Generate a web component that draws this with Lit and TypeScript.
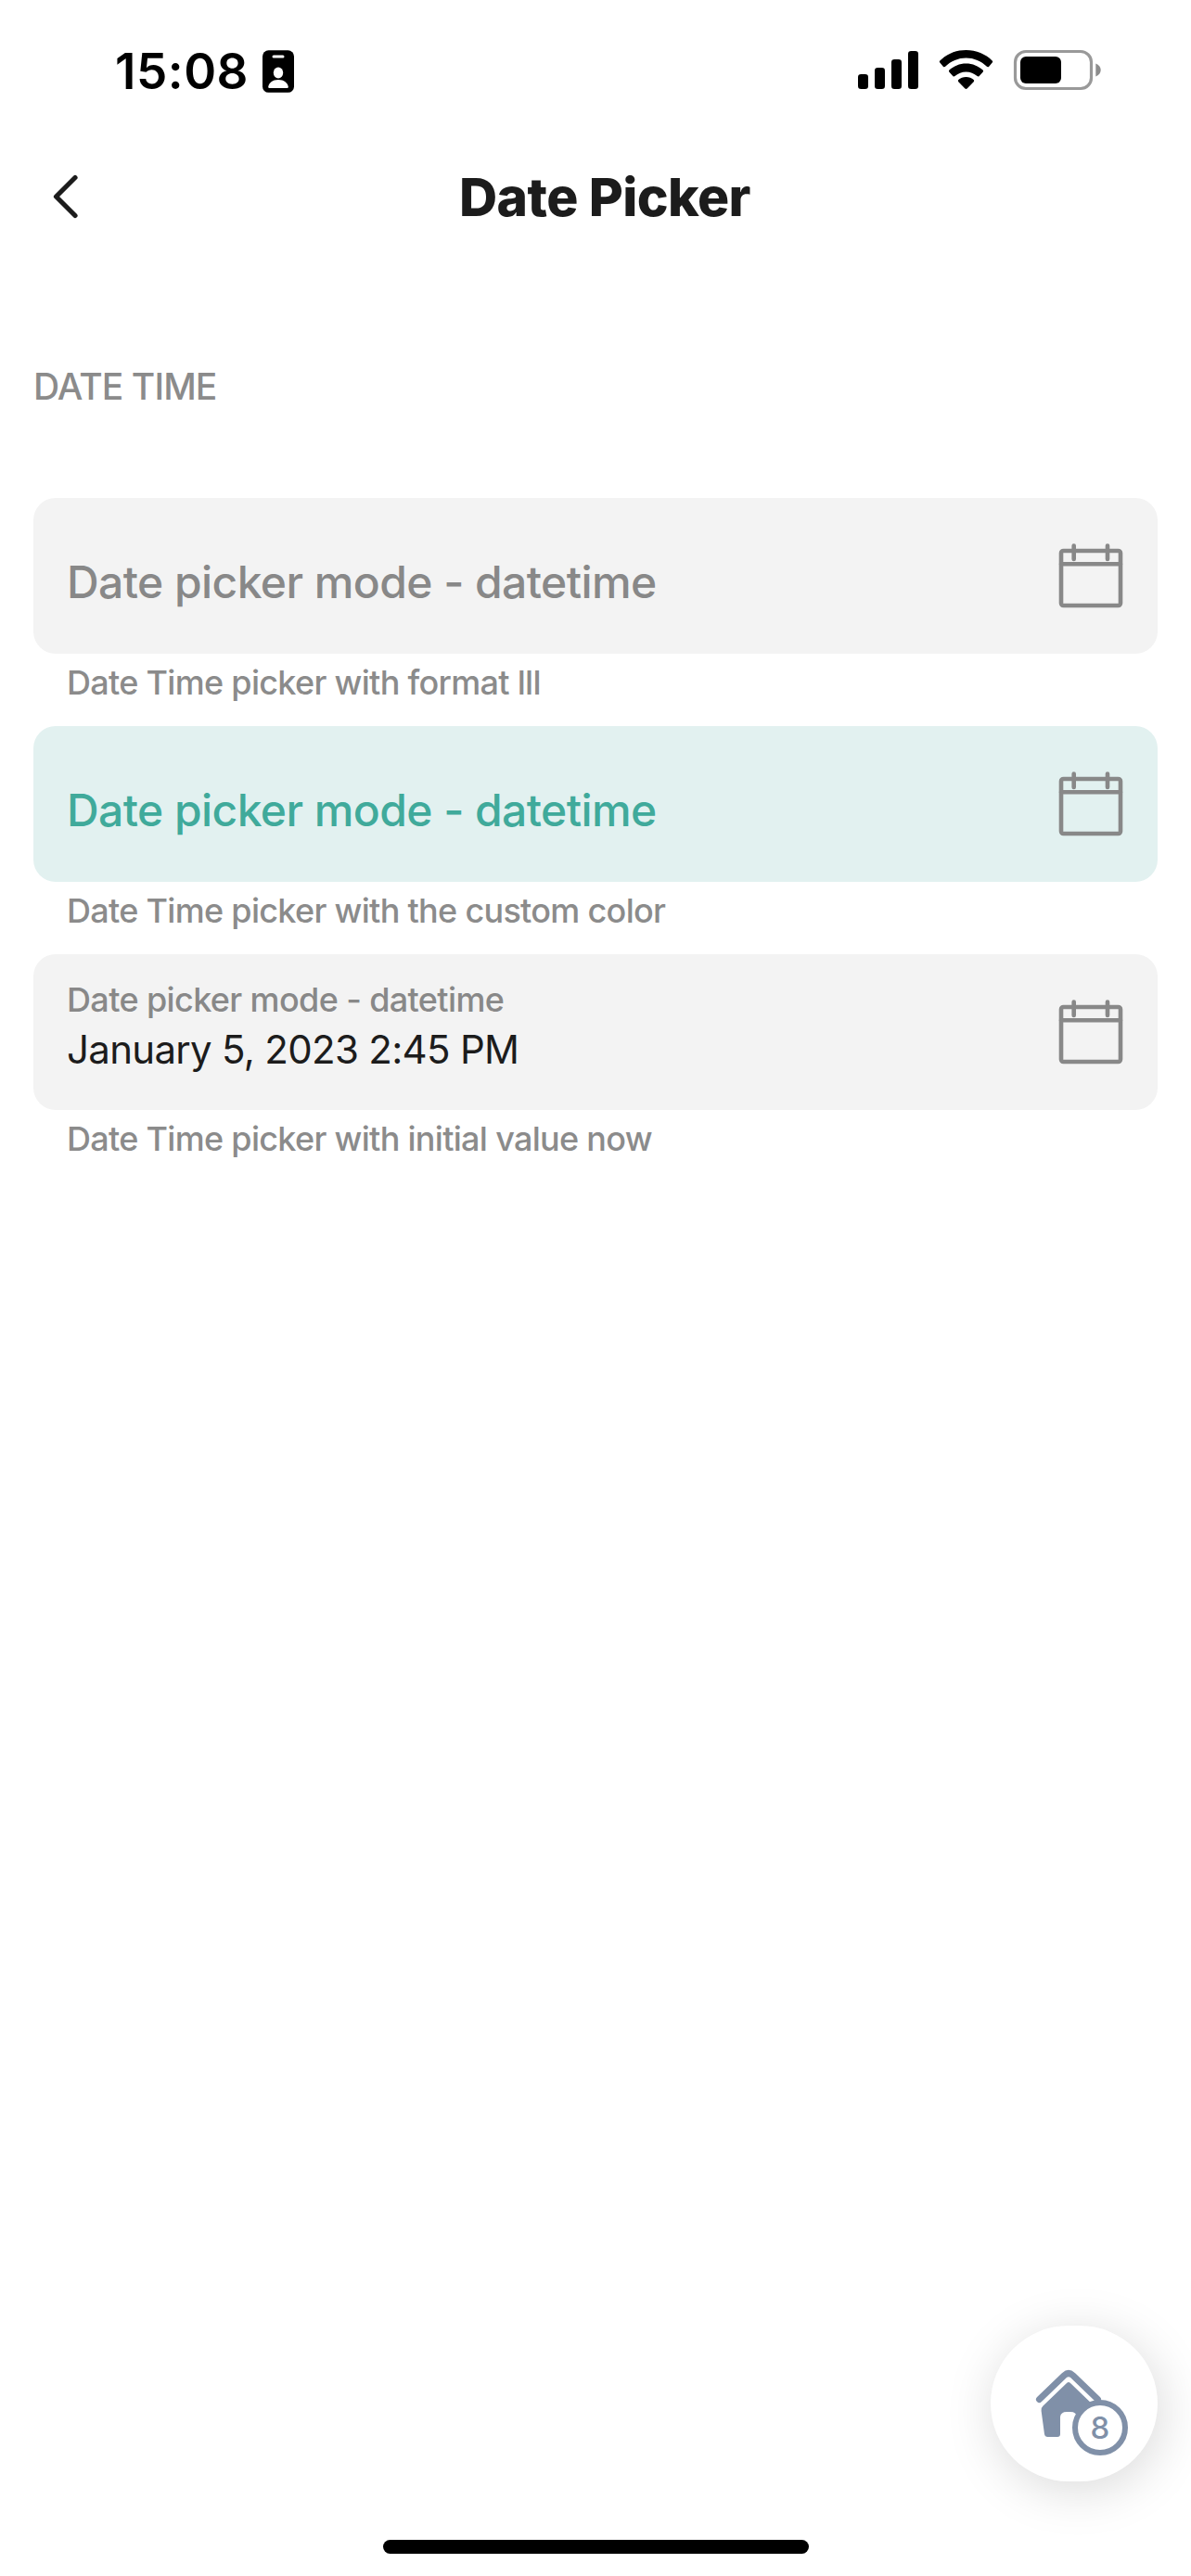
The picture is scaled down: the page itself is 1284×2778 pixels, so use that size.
import { LitElement, html, svg, css, nothing } from "lit";
import { customElement, property } from "lit/decorators.js";

@customElement("status-bar")
class StatusBar extends LitElement {
  static styles = css`
    :host {
      display: flex;
      justify-content: space-between;
      align-items: flex-start;
      height: 141px;
      padding: 0 96px 0 124px;
      box-sizing: border-box;
    }
    .left {
      display: flex;
      align-items: flex-start;
      gap: 16px;
      padding-top: 45px;
    }
    .time {
      font-size: 53px;
      font-weight: 600;
      line-height: 65px;
      letter-spacing: 0.5px;
      width: 143px;
      white-space: nowrap;
      color: #000;
    }
    .badge {
      margin-top: 9px;
    }
    .right {
      padding-top: 53px;
    }
    svg {
      display: block;
    }
  `;
  render() {
    return html`
      <div class="left">
        <span class="time">15:08</span>
        <svg class="badge" width="34" height="46" viewBox="0 0 34 46">
          <rect x="0" y="0.3" width="34" height="45.5" rx="6.5" fill="#000" />
          <rect x="10.5" y="5.4" width="13" height="3" rx="1.5" fill="#fff" />
          <ellipse cx="17" cy="24.5" rx="5.2" ry="6" fill="#fff" />
          <path d="M6.2 39.8C6.6 35.5 11 32 17 32s10.400 3.500 10.800 7.800q0 1.200-1.200 1.200H7.400q-1.200 0-1.200-1.200z" fill="#fff" />
        </svg>
      </div>
      <svg class="right" width="264" height="46" viewBox="924 53 264 46">
        <rect x="925" y="80" width="11" height="16" rx="3.300" />
        <rect x="943" y="73" width="11" height="23" rx="3.300" />
        <rect x="961" y="64" width="11" height="32" rx="3.300" />
        <rect x="979" y="55" width="11" height="41" rx="3.300" />
        <path d="M1041.500 54C1030.500 54 1020.500 58.300 1013.300 65.400Q1012.300 66.500 1013.300 67.500L1016.800 71.700Q1018 72.800 1019.100 71.800C1025.200 66 1033 62.600 1041.500 62.600S1057.800 66 1063.900 71.800Q1065 72.800 1066.200 71.700L1069.700 67.500Q1070.700 66.500 1069.700 65.400C1062.500 58.300 1052.500 54 1041.500 54z" />
        <path d="M1041.500 68.500C1034.500 68.500 1028.200 71.200 1023.400 75.600Q1022.400 76.700 1023.400 77.700L1027.300 81.900Q1028.400 83 1029.500 82C1032.800 79.200 1037 77.400 1041.500 77.400S1050.200 79.200 1053.500 82Q1054.600 83 1055.700 81.900L1059.600 77.700Q1060.600 76.700 1059.600 75.600C1054.800 71.200 1048.500 68.500 1041.500 68.500z" />
        <path d="M1041.500 83C1038.300 83 1035.500 84.200 1033.300 86.100Q1032.300 87.200 1033.300 88.200L1040.400 95.500Q1041.500 96.400 1042.600 95.500L1049.700 88.200Q1050.700 87.200 1049.700 86.100C1047.500 84.200 1044.700 83 1041.500 83z" />
        <rect x="1094.500" y="55.500" width="82" height="40" rx="11.500" fill="none" stroke="#999" stroke-width="3.200" />
        <rect x="1100" y="61" width="44" height="29" rx="6" />
        <path d="M1181.300 68.500C1184.600 69.700 1186.700 72.400 1186.700 75.500S1184.600 81.300 1181.300 82.500z" fill="#8c8c8c" />
      </svg>
    `;
  }
}

@customElement("date-field")
class DateField extends LitElement {
  @property() label = "";
  @property() value = "";
  @property() helper = "";
  @property() tone = "plain";

  static styles = css`
    :host {
      display: block;
      height: 246px;
    }
    .box {
      display: flex;
      align-items: flex-start;
      justify-content: space-between;
      height: 168px;
      box-sizing: border-box;
      padding: 0 36px;
      border-radius: 24px;
      background: #f3f3f3;
      color: #888;
      white-space: nowrap;
    }
    .box.mint {
      background: #e2f1f0;
      color: #40aa9b;
    }
    .label {
      font-size: 48px;
      font-weight: 500;
      line-height: 60px;
      padding-top: 61px;
      letter-spacing: -0.57px;
    }
    .stack {
      display: flex;
      flex-direction: column;
      padding-top: 26px;
    }
    .small,
    .helper {
      font-size: 36px;
      font-weight: 500;
      line-height: 46px;
      letter-spacing: -0.7px;
    }
    .small {
      letter-spacing: -0.63px;
    }
    .value {
      font-size: 42px;
      font-weight: 400;
      line-height: 54px;
      letter-spacing: -0.7px;
      margin-top: 4px;
      color: #1c1c1c;
    }
    .helper {
      padding: 8px 36px 0;
      color: #8b8b8b;
      white-space: nowrap;
    }
    .icon {
      display: block;
      margin-top: 48px;
      fill: none;
      stroke: #888;
      stroke-width: 4.600;
      stroke-linecap: round;
    }
  `;

  render() {
    return html`
      <div class="box ${this.tone}">
        ${this.value
          ? html`<div class="stack">
              <span class="small">${this.label}</span>
              <span class="value">${this.value}</span>
            </div>`
          : html`<span class="label">${this.label}</span>`}
        <svg class="icon" width="72" height="72" viewBox="0 0 72 72">
          <rect x="4" y="9" width="64" height="59" rx="2.500" />
          <path d="M4 23.200H68M17.700 3.500V18M54 3.500V18" />
        </svg>
      </div>
      ${this.helper ? html`<div class="helper">${this.helper}</div>` : nothing}
    `;
  }
}

@customElement("home-fab")
class HomeFab extends LitElement {
  @property({ type: Number }) count = 0;

  static styles = css`
    :host {
      display: block;
      width: 180px;
      height: 168px;
      border-radius: 84px;
      background: #fff;
      box-shadow: 4px 9px 54px rgba(0, 0, 0, 0.15);
    }
    svg {
      display: block;
    }
    .num {
      font-size: 33px;
      font-weight: 450;
    }
  `;

  render() {
    return html`
      <svg width="180" height="168" viewBox="0 0 180 168">
        ${svg`
          <path d="M52.500 79.500L79.500 53.500Q84 49.500 88.500 53.500L115.500 79.500" fill="none" stroke="#8090a8" stroke-width="7" stroke-linecap="round" stroke-linejoin="round" />
          <path d="M82 62Q84 60.200 86 62L113 88V117Q112.500 120 109.500 120H93V98.500Q92.500 93 86 93H82Q75.500 93 75 98.500V117Q75 120 72 120H61.500Q58.500 120 58 117L54.600 92Q54.200 88.500 56.500 86.500z" fill="#8090a8" />
          <circle cx="118" cy="110" r="27" fill="#fff" stroke="#8090a8" stroke-width="6" />
          <text class="num" x="118" y="121.500" text-anchor="middle" fill="#8090a8">${this.count}</text>
        `}
      </svg>
    `;
  }
}

@customElement("app-root")
class AppRoot extends LitElement {
  static styles = css`
    :host {
      display: flex;
      flex-direction: column;
      position: relative;
      width: 1284px;
      height: 2778px;
      overflow: hidden;
      background: #fff;
      font-family: Inter, "Liberation Sans", sans-serif;
    }
    .nav {
      display: grid;
      grid-template-columns: 96px 1fr 76px;
      align-items: center;
      height: 144px;
    }
    .back {
      display: block;
      margin-left: 55px;
    }
    .title {
      margin: 0;
      text-align: center;
      font-size: 57px;
      font-weight: 800;
      line-height: 72px;
      letter-spacing: -0.6px;
      color: #1c1c1c;
    }
    .section {
      padding: 107px 36px 0;
      height: 252px;
      box-sizing: border-box;
      font-size: 39px;
      font-weight: 500;
      line-height: 50px;
      letter-spacing: -0.9px;
      color: #8b8b8b;
    }
    .fields {
      display: flex;
      flex-direction: column;
      padding: 0 36px;
    }
    .fab {
      position: absolute;
      right: 36px;
      bottom: 102px;
    }
    .handle {
      width: 459px;
      height: 15px;
      border-radius: 8px;
      background: #000;
      margin: auto auto 24px;
    }
  `;

  private fields = [
    { label: "Date picker mode - datetime", helper: "Date Time picker with format lll", tone: "plain", value: "" },
    { label: "Date picker mode - datetime", helper: "Date Time picker with the custom color", tone: "mint", value: "" },
    {
      label: "Date picker mode - datetime",
      helper: "Date Time picker with initial value now",
      tone: "plain",
      value: "January 5, 2023 2:45 PM",
    },
  ];

  render() {
    return html`
      <status-bar></status-bar>
      <header class="nav">
        <svg class="back" width="31" height="50" viewBox="0 0 31 50" fill="none" stroke="#1c1c1c" stroke-width="5.200" stroke-linecap="round" stroke-linejoin="round">
          <path d="M26 3.500L5.500 24L26 44.500" />
        </svg>
        <h1 class="title">Date Picker</h1>
      </header>
      <div class="section">DATE TIME</div>
      <main class="fields">
        ${this.fields.map(
          (f) => html`<date-field .label=${f.label} .helper=${f.helper} .tone=${f.tone} .value=${f.value}></date-field>`
        )}
      </main>
      <home-fab class="fab" .count=${8}></home-fab>
      <div class="handle"></div>
    `;
  }
}
